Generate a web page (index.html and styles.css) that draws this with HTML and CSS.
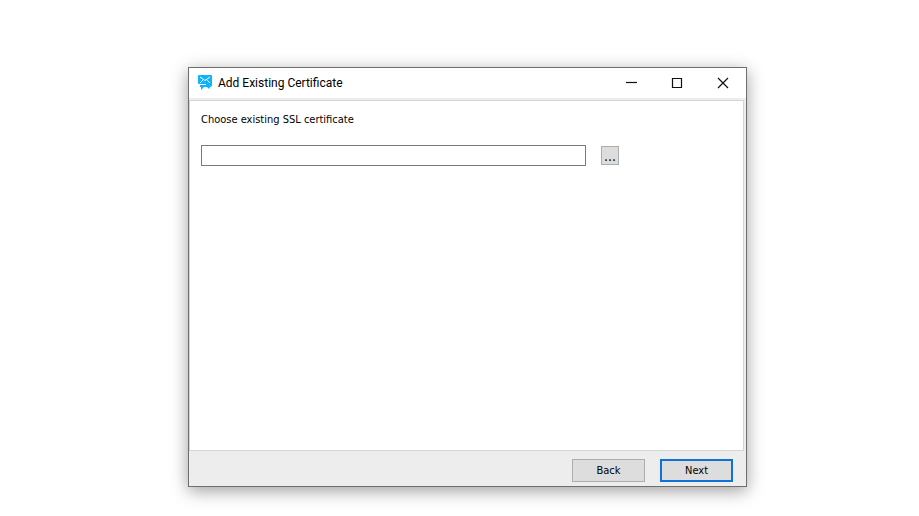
FILE: index.html
```
<!DOCTYPE html>
<html lang="en">
<head>
    <meta charset="UTF-8">
    <meta name="viewport" content="width=device-width, initial-scale=1.0">
    <title>Add Existing Certificate</title>
    <link rel="stylesheet" href="styles.css">
</head>
<body>
    <form class="window">
        <header class="title-bar">
            <svg class="app-icon" width="16" height="16" viewBox="0 0 16 16">
                <path fill="#0db4fb" d="M1 0h12q1 0 1 1v7q0 1-1 1H1Q0 9 0 8V1Q0 0 1 0z"/>
                <path fill="#0db4fb" d="M8 8h6v2q0 2-2 2l-1 2-2-2H6L3 15v-3H2v-2h6z"/>
                <path fill="none" stroke="#fff" d="M2 2l5 3.500 5-3.500M2 8l3-3M12 8L9 5M0 9.500h8"/>
            </svg>
            <h1 class="title">Add Existing Certificate</h1>
            <button type="button" class="caption-button" aria-label="Minimize">
                <svg width="12" height="12" viewBox="0 0 12 12"><path d="M1 5.5h11"/></svg>
            </button>
            <button type="button" class="caption-button" aria-label="Maximize">
                <svg width="12" height="12" viewBox="0 0 12 12"><path d="M1.5 1.5h9v9h-9z"/></svg>
            </button>
            <button type="button" class="caption-button" aria-label="Close">
                <svg width="12" height="12" viewBox="0 0 12 12"><path d="M1 1l10 10M11 1L1 11"/></svg>
            </button>
        </header>

        <main class="panel">
            <label for="certificate">Choose existing SSL certificate</label>
            <div class="file-row">
                <input type="text" id="certificate" name="certificate" class="file-input">
                <button type="button" class="browse-button" aria-label="Browse">...</button>
            </div>
        </main>

        <footer class="actions">
            <button type="button" class="action-button">Back</button>
            <button type="submit" class="action-button primary">Next</button>
        </footer>
    </form>
</body>
</html>
```
FILE: styles.css
```
* {
    box-sizing: border-box;
}
body {
    display: flex;
    min-height: 100vh;
    margin: 0;
    padding: 67px 172px 29px 188px;
    background: #fff;
    color: #000;
    font-family: "DejaVu Sans Condensed", sans-serif;
    font-size: 11px;
    line-height: 16px;
}
button {
    padding: 0;
    font: inherit;
    color: inherit;
}
.window {
    display: flex;
    flex: 1;
    flex-direction: column;
    border: 1px solid #6e6e6e;
    background: #ededed;
    box-shadow: 0 4px 16px rgba(0, 0, 0, 0.38);
}
.title-bar {
    display: flex;
    align-items: center;
    height: 30px;
    padding-left: 9px;
    background: #fff;
}
.app-icon {
    margin-right: 4px;
}
.title {
    flex: 1;
    margin: 0;
    font-family: Roboto, sans-serif;
    font-size: 12px;
    font-weight: normal;
}
.caption-button {
    display: flex;
    align-items: center;
    justify-content: center;
    width: 46px;
    height: 30px;
    border: none;
    background: none;
}
.caption-button svg {
    fill: none;
    stroke: #111;
    stroke-width: 1.2;
}
.panel {
    flex: 1;
    margin: 2px 2px 0 0;
    padding: 11px 124px 10px 11px;
    border: 1px solid #d5d5d5;
    background: #fff;
}
.file-row {
    display: flex;
    align-items: center;
    gap: 15px;
    margin-top: 17px;
}
.file-input {
    flex: 1;
    height: 21px;
    padding: 0 4px;
    border: 1px solid #7a7a7a;
    font: inherit;
}
.browse-button {
    width: 18px;
    height: 19px;
    border: 1px solid #adadad;
    background: #dddddd;
    font-size: 14px;
}
.actions {
    display: flex;
    justify-content: flex-end;
    gap: 15px;
    padding: 8px 13px 4px;
}
.action-button {
    width: 73px;
    height: 23px;
    border: 1px solid #adadad;
    background: #dddddd;
}
.primary {
    border: 2px solid #0f73d6;
}
```
